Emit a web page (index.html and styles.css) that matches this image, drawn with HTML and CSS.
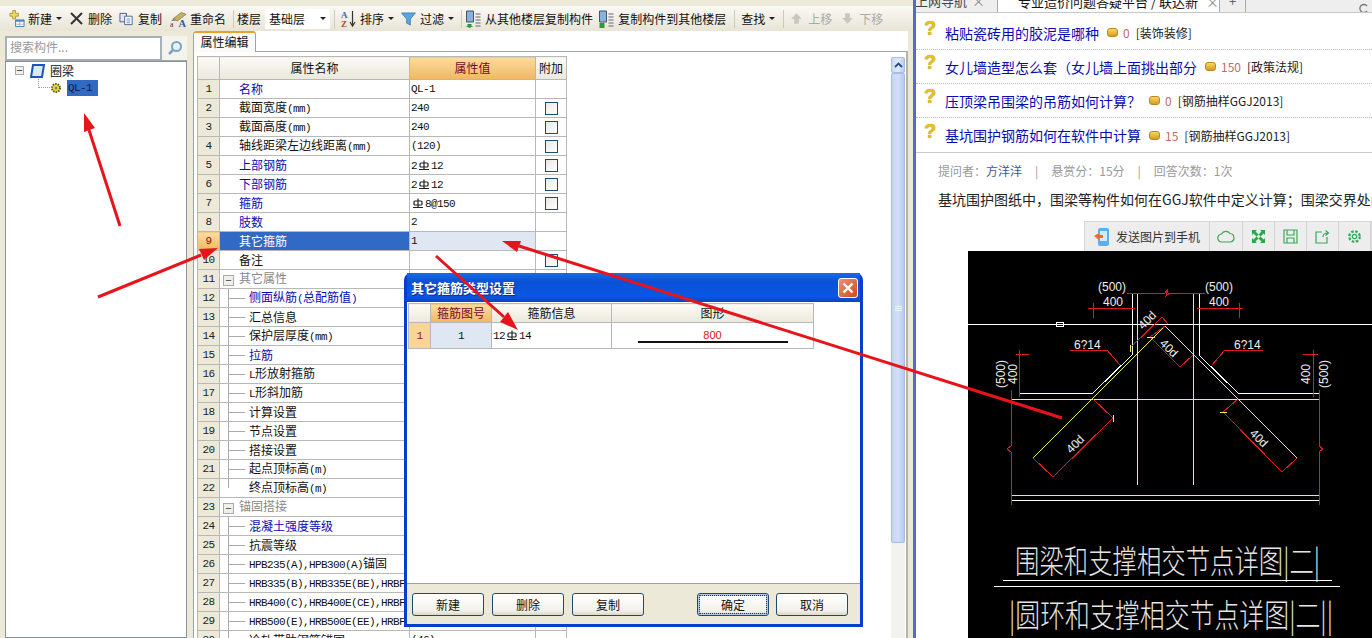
FILE: index.html
```html
<!DOCTYPE html>
<html lang="zh">
<head>
    <meta charset="UTF-8">
    <title>属性编辑</title>
    <link rel="stylesheet" href="styles.css">
</head>
<body>

    <!-- 钢筋符号 -->
    <svg class="defs" width="0" height="0">
        <symbol id="bar" viewBox="0 0 12 12">
            <path d="M1 10.5h10M3 4h6a1 1 0 0 1 1 1v2a1 1 0 0 1-1 1H3a1 1 0 0 1-1-1V5a1 1 0 0 1 1-1zM6 1.5v9" fill="none" stroke="#222" stroke-width="1.2"/>
        </symbol>
    </svg>

    <div class="app">
        <div class="toolbar">
            <div class="tool w-new">
                <svg class="ico" viewBox="0 0 18 18"><path d="M2 3h3V0h3v3h3v3H8v3H5V6H2z" fill="#f0d860" stroke="#a08a30" stroke-width=".8"/><path d="M8 10h9v7H8z" fill="#fff" stroke="#4a78b8"/><path d="M8 10h9v2H8z" fill="#5a88c8"/><path d="M8 14.500h9M12.500 12v5" stroke="#8ab" stroke-width=".8"/></svg>
                <span>新建</span><i class="caret"></i>
            </div>
            <div class="tool w-del">
                <svg class="ico-s" viewBox="0 0 13 13"><path d="M1 1l11 11M12 1L1 12" stroke="#333" stroke-width="2"/></svg>
                <span>删除</span>
            </div>
            <div class="tool w-copy">
                <svg class="ico-m" viewBox="0 0 16 14"><path d="M1 1h7v9H1z" fill="#dde8f6" stroke="#557"/><path d="M6 4h8v9H6z" fill="#fff" stroke="#468"/><path d="M8 7h4M8 9h4M8 11h4" stroke="#57a" stroke-width=".8"/></svg>
                <span>复制</span>
            </div>
            <div class="tool w-ren">
                <svg class="ico" viewBox="0 0 18 18"><path d="M3 9l9-7 5 2-9 7z" fill="#c9b060" stroke="#776a40" stroke-width=".7"/><path d="M1 11l4-3 1 3z" fill="#7a9a70"/><text x="0" y="17" class="ico-t">a</text><text x="9" y="17" class="ico-t2">A</text></svg>
                <span>重命名</span>
            </div>
            <i class="sep"></i>
            <div class="tool w-floor"><span>楼层</span></div>
            <div class="floor-select"><span>基础层</span><i class="caret"></i></div>
            <i class="sep"></i>
            <div class="tool w-sort">
                <svg class="ico" viewBox="0 0 17 18"><text x="1" y="8" class="az a">A</text><text x="1" y="17" class="az z">Z</text><path d="M12.500 1v14M10 12l2.500 4 2.500-4" fill="none" stroke="#333" stroke-width="1.200"/></svg>
                <span>排序</span><i class="caret"></i>
            </div>
            <div class="tool w-filter">
                <svg class="ico-m" viewBox="0 0 15 15"><path d="M0 1h15L9.500 7.500V14l-4-2V7.500z" fill="#5aa6e0" stroke="#2a6aa8" stroke-width=".7"/></svg>
                <span>过滤</span><i class="caret"></i>
            </div>
            <i class="sep"></i>
            <div class="tool w-from">
                <svg class="ico" viewBox="0 0 16 18"><path d="M1 1h7v11H1z" fill="#8ab0dc" stroke="#456"/><path d="M10 4h5M10 7h5M10 10h5M10 13h5M10 16h5" stroke="#667" stroke-width="1.200"/><path d="M2 14h4v2h2l-4 2-4-2h2z" fill="#2a9a3a"/></svg>
                <span>从其他楼层复制构件</span>
            </div>
            <div class="tool w-to">
                <svg class="ico" viewBox="0 0 16 18"><path d="M1 1h7v11H1z" fill="#8ab0dc" stroke="#456"/><path d="M10 4h5M10 7h5M10 10h5M10 13h5M10 16h5" stroke="#667" stroke-width="1.200"/><path d="M1 13h5v5H1z" fill="#2a9a3a"/></svg>
                <span>复制构件到其他楼层</span>
            </div>
            <i class="sep"></i>
            <div class="tool w-find"><span>查找</span><i class="caret"></i></div>
            <i class="sep"></i>
            <div class="tool off w-up">
                <svg class="ico-s" viewBox="0 0 11 11"><path d="M5.500 1L10 6H7.500v4h-4V6H1z" fill="#c8c8c0"/></svg>
                <span>上移</span>
            </div>
            <div class="tool off w-down">
                <svg class="ico-s" viewBox="0 0 11 11"><path d="M5.500 10L10 5H7.500V1h-4v4H1z" fill="#c8c8c0"/></svg>
                <span>下移</span>
            </div>
        </div>

        <div class="main">
            <div class="side">
                <div class="search">
                    <div class="search-input">搜索构件...</div>
                    <div class="search-btn">
                        <svg width="16" height="16" viewBox="0 0 16 16"><circle cx="9.500" cy="6.500" r="4.500" fill="#e8f2fa" stroke="#7aa4c4" stroke-width="2"/><path d="M6 10l-4 4" stroke="#7aa4c4" stroke-width="2.500"/></svg>
                    </div>
                </div>
                <div class="tree">
                    <div class="tree-row">
                        <i class="expander">−</i>
                        <svg class="tree-ico" viewBox="0 0 15 14"><path d="M3 1h11l-2 12H1z" fill="#dbe8f8" stroke="#1b55b4" stroke-width="2"/></svg>
                        <span>圈梁</span>
                    </div>
                    <div class="tree-row child">
                        <i class="dots"></i>
                        <svg class="gear" viewBox="0 0 12 12"><circle cx="6" cy="6" r="4" fill="#e8e040" stroke="#665a10" stroke-width="2" stroke-dasharray="1.500 1"/><circle cx="6" cy="6" r="1.500" fill="#886"/></svg>
                        <span class="picked">QL-1</span>
                    </div>
                </div>
            </div>

            <div class="prop">
                <div class="tabs"><div class="tab">属性编辑</div></div>
                <div class="prop-body">
                    <table class="grid">
                        <colgroup><col class="c-no"><col class="c-name"><col class="c-val"><col class="c-add"></colgroup>
                        <thead>
                            <tr><th></th><th>属性名称</th><th class="hot">属性值</th><th>附加</th></tr>
                        </thead>
                        <tbody>
                            <tr><td class="no">1</td><td class="name link">名称</td><td class="val m">QL-1</td><td></td></tr>
                            <tr><td class="no">2</td><td class="name">截面宽度<span class="m">(mm)</span></td><td class="val m">240</td><td class="add"><i class="check"></i></td></tr>
                            <tr><td class="no">3</td><td class="name">截面高度<span class="m">(mm)</span></td><td class="val m">240</td><td class="add"><i class="check"></i></td></tr>
                            <tr><td class="no">4</td><td class="name">轴线距梁左边线距离<span class="m">(mm)</span></td><td class="val m">(120)</td><td class="add"><i class="check"></i></td></tr>
                            <tr><td class="no">5</td><td class="name link">上部钢筋</td><td class="val m">2<svg class="bar"><use href="#bar"/></svg>12</td><td class="add"><i class="check"></i></td></tr>
                            <tr><td class="no">6</td><td class="name link">下部钢筋</td><td class="val m">2<svg class="bar"><use href="#bar"/></svg>12</td><td class="add"><i class="check"></i></td></tr>
                            <tr><td class="no">7</td><td class="name link">箍筋</td><td class="val m"><svg class="bar"><use href="#bar"/></svg>8@150</td><td class="add"><i class="check"></i></td></tr>
                            <tr><td class="no">8</td><td class="name link">肢数</td><td class="val m">2</td><td></td></tr>
                            <tr class="current"><td class="no">9</td><td class="name">其它箍筋</td><td class="val m">1</td><td></td></tr>
                            <tr><td class="no">10</td><td class="name">备注</td><td class="val"></td><td class="add"><i class="check"></i></td></tr>
                            <tr><td class="no">11</td><td class="name group"><i class="expander">−</i>其它属性</td><td></td><td></td></tr>
                            <tr class="sub"><td class="no">12</td><td class="name link">侧面纵筋<span class="m">(</span>总配筋值<span class="m">)</span></td><td></td><td></td></tr>
                            <tr class="sub"><td class="no">13</td><td class="name">汇总信息</td><td></td><td></td></tr>
                            <tr class="sub"><td class="no">14</td><td class="name">保护层厚度<span class="m">(mm)</span></td><td></td><td></td></tr>
                            <tr class="sub"><td class="no">15</td><td class="name link">拉筋</td><td></td><td></td></tr>
                            <tr class="sub"><td class="no">16</td><td class="name"><span class="m">L</span>形放射箍筋</td><td></td><td></td></tr>
                            <tr class="sub"><td class="no">17</td><td class="name"><span class="m">L</span>形斜加筋</td><td></td><td></td></tr>
                            <tr class="sub"><td class="no">18</td><td class="name">计算设置</td><td></td><td></td></tr>
                            <tr class="sub"><td class="no">19</td><td class="name">节点设置</td><td></td><td></td></tr>
                            <tr class="sub"><td class="no">20</td><td class="name">搭接设置</td><td></td><td></td></tr>
                            <tr class="sub"><td class="no">21</td><td class="name">起点顶标高<span class="m">(m)</span></td><td></td><td></td></tr>
                            <tr class="sub last"><td class="no">22</td><td class="name">终点顶标高<span class="m">(m)</span></td><td></td><td></td></tr>
                            <tr><td class="no">23</td><td class="name group"><i class="expander">−</i>锚固搭接</td><td></td><td></td></tr>
                            <tr class="sub"><td class="no">24</td><td class="name link">混凝土强度等级</td><td></td><td></td></tr>
                            <tr class="sub"><td class="no">25</td><td class="name">抗震等级</td><td></td><td></td></tr>
                            <tr class="sub"><td class="no">26</td><td class="name"><span class="m">HPB235(A),HPB300(A)</span>锚固</td><td></td><td></td></tr>
                            <tr class="sub"><td class="no">27</td><td class="name"><span class="m">HRB335(B),HRB335E(BE),HRBF</span></td><td></td><td></td></tr>
                            <tr class="sub"><td class="no">28</td><td class="name"><span class="m">HRB400(C),HRB400E(CE),HRBF</span></td><td></td><td></td></tr>
                            <tr class="sub"><td class="no">29</td><td class="name"><span class="m">HRB500(E),HRB500E(EE),HRBF</span></td><td></td><td></td></tr>
                            <tr class="sub"><td class="no">30</td><td class="name">冷轧带肋钢筋锚固</td><td class="val m">(46)</td><td></td></tr>
                        </tbody>
                    </table>
                    <div class="scrollbar">
                        <div class="scroll-btn"><svg width="9" height="6" viewBox="0 0 9 6"><path d="M1 5l3.500-3.500L8 5" fill="none" stroke="#2a4a80" stroke-width="1.800"/></svg></div>
                        <div class="scroll-thumb"><i></i><i></i><i></i></div>
                    </div>
                </div>
            </div>
        </div>
    </div>

    <div class="browser">
        <div class="b-tabs">
            <div class="b-tab first">上网导航<em>×</em></div>
            <div class="b-tab active">
                <svg width="14" height="12" viewBox="0 0 14 12"><rect width="14" height="12" rx="2" fill="#3a8ad8"/></svg>
                专业造价问题答疑平台 / 联达新<em>×</em>
            </div>
            <div class="b-tab plus">+</div>
            <div class="b-refresh">
                <svg width="11" height="11" viewBox="0 0 11 11"><path d="M9 8A4 4 0 1 1 9 3" fill="none" stroke="#777" stroke-width="1.300"/></svg>
            </div>
        </div>

        <ul class="questions">
            <li><b class="ask">?</b><a>粘贴瓷砖用的胶泥是哪种</a><i class="coin"></i><span class="score">0</span><span class="topic">[装饰装修]</span></li>
            <li><b class="ask">?</b><a>女儿墙造型怎么套（女儿墙上面挑出部分</a><i class="coin"></i><span class="score">150</span><span class="topic">[政策法规]</span></li>
            <li><b class="ask">?</b><a>压顶梁吊围梁的吊筋如何计算？</a><i class="coin wide"></i><span class="score">0</span><span class="topic">[钢筋抽样GGJ2013]</span></li>
            <li><b class="ask">?</b><a>基坑围护钢筋如何在软件中计算</a><i class="coin"></i><span class="score">15</span><span class="topic">[钢筋抽样GGJ2013]</span></li>
        </ul>

        <div class="meta">
            <span>提问者：<a>方洋洋</a></span><i>|</i><span>悬赏分：15分</span><i>|</i><span>回答次数：1次</span>
        </div>
        <p class="desc">基坑围护图纸中，围梁等构件如何在GGJ软件中定义计算；围梁交界处的钢筋如何处理</p>

        <div class="pic-bar">
            <div class="pic-btn send">
                <svg width="16" height="20" viewBox="0 0 16 20"><rect x="4" y="1" width="11" height="18" rx="2" fill="#5ab0e8"/><rect x="6" y="4" width="7" height="10" fill="#cfeafa"/><path d="M0 9l5-3v2h4v3H5v2z" fill="#ee6a30"/></svg>
                发送图片到手机
            </div>
            <div class="pic-btn cloud"><svg width="18" height="13" viewBox="0 0 18 13"><path d="M5 12a4 4 0 0 1-.5-8A5 5 0 0 1 13 3.500 4.300 4.300 0 0 1 13.500 12z" fill="none" stroke="#3aa858" stroke-width="1.200"/></svg></div>
            <div class="pic-btn w-fit"><svg width="13" height="13" viewBox="0 0 13 13"><path d="M0 0h5L3.500 1.500 6.500 4.500 4.500 6.500 1.500 3.500 0 5zM13 0v5l-1.500-1.500-3 3-2-2 3-3L8 0zM0 13V8l1.500 1.500 3-3 2 2-3 3L5 13zM13 13H8l1.500-1.500-3-3 2-2 3 3L13 8z" fill="#2aa848"/></svg></div>
            <div class="pic-btn w-save"><svg width="15" height="15" viewBox="0 0 15 15"><path d="M1 1h13v13H1zM4 1v5h7V1M4 14V9h7v5" fill="none" stroke="#3aa858" stroke-width="1.200"/></svg></div>
            <div class="pic-btn w-share"><svg width="15" height="15" viewBox="0 0 15 15"><path d="M7 3H1v11h11V8M8 8c0-3 2-4 5-4M10.500 1.500L13.500 4l-3 2.500" fill="none" stroke="#3aa858" stroke-width="1.200"/></svg></div>
            <div class="pic-btn w-set"><svg width="15" height="15" viewBox="0 0 15 15"><circle cx="7.500" cy="7.500" r="2.200" fill="none" stroke="#3aa858" stroke-width="1.200"/><circle cx="7.500" cy="7.500" r="5.200" fill="none" stroke="#3aa858" stroke-width="2.400" stroke-dasharray="2.500 1.600"/></svg></div>
        </div>

        <svg class="cad" viewBox="968 251 404 387">
            <path class="w" d="M968 324H1372M1132 293V355L1093 393H1020M1199 293V355L1238 393H1319M1011 500H1319"/>
            <path class="w" d="M1056 322h7v4h-7z"/>
            <path class="y" d="M1137 293V485M1193 293V485M1011 399H1319M1033 458L1165 326L1297 458M1011 495H1319"/>
            <path class="r" d="M1127 293H1165L1168 289L1166 296L1170 293H1205M1088 308H1135M1197 308H1243M1093 303V318M1239 303V318"/>
            <path class="r" d="M1033 458L1053 477L1113 418L1093 399M1297 458L1282 472L1223 412L1238 399"/>
            <path class="r" d="M1165 326L1150 337L1180 367L1193 355M1130 348L1162 317L1168 324"/>
            <path class="r" d="M1011 390V446L1007 449L1011 452V505M1319 390V446L1323 449L1319 452V505"/>
            <path class="r" d="M1019 350V397M1016 354H1029M1313 350V397M1303 354H1318M1070 350H1107L1120 365M1263 350H1225L1212 365"/>
            <path class="y" d="M1130 345V352M1147 337H1155M1220 412H1227M1113 415V422"/>
            <text class="t" x="1098" y="291">(500)</text>
            <text class="t" x="1103" y="306">400</text>
            <text class="t" x="1205" y="291">(500)</text>
            <text class="t" x="1209" y="306">400</text>
            <text class="t" x="1074" y="349">6?14</text>
            <text class="t" x="1234" y="349">6?14</text>
            <text class="t mid" transform="translate(1005 374) rotate(-90)">(500)</text>
            <text class="t mid" transform="translate(1017 374) rotate(-90)">400</text>
            <text class="t mid" transform="translate(1310 374) rotate(-90)">400</text>
            <text class="t mid" transform="translate(1328 374) rotate(-90)">(500)</text>
            <text class="t mid" transform="translate(1078 447) rotate(-45)">40d</text>
            <text class="t mid" transform="translate(1256 441) rotate(45)">40d</text>
            <text class="t mid" transform="translate(1166 351) rotate(45)">40d</text>
            <text class="t mid" transform="translate(1150 323) rotate(-45)">40d</text>
            <text class="title" x="1015" y="573" textLength="305" lengthAdjust="spacingAndGlyphs">围梁和支撑相交节点详图|二|</text>
            <path class="w" d="M1003 580H1332" stroke-width="3"/>
            <path class="w" d="M994 586H1340"/>
            <text class="title" x="1009" y="627" textLength="324" lengthAdjust="spacingAndGlyphs">|圆环和支撑相交节点详图|二||</text>
        </svg>
    </div>

    <!-- 弹出窗口 -->
    <div class="dialog">
        <div class="dialog-title">
            <span>其它箍筋类型设置</span>
            <div class="dialog-close">
                <svg width="12" height="12" viewBox="0 0 12 12"><path d="M1.500 1.500l9 9M10.500 1.500l-9 9" stroke="#fff" stroke-width="2.400"/></svg>
            </div>
        </div>
        <div class="dialog-body">
            <table class="grid small">
                <colgroup><col class="d-no"><col class="d-fig"><col class="d-info"><col class="d-shape"></colgroup>
                <thead>
                    <tr><th></th><th class="hot">箍筋图号</th><th>箍筋信息</th><th>图形</th></tr>
                </thead>
                <tbody>
                    <tr class="current-d">
                        <td class="no">1</td>
                        <td class="fig m">1</td>
                        <td class="val m">12<svg class="bar"><use href="#bar"/></svg>14</td>
                        <td class="shape"><span>800</span><i></i></td>
                    </tr>
                </tbody>
            </table>
        </div>
        <div class="dialog-foot">
            <button class="btn">新建</button>
            <button class="btn">删除</button>
            <button class="btn">复制</button>
            <button class="btn ok">确定</button>
            <button class="btn">取消</button>
        </div>
    </div>

    <!-- 红色箭头 -->
    <svg class="arrows" viewBox="0 0 1372 638">
        <path d="M120 226L89 130M98 297L201 255M436 256L504 317M1062 418L519 246"/>
        <polygon points="84,113 95,128 84,132"/>
        <polygon points="218,248 204,260 199,249"/>
        <polygon points="518,330 500,322 508,312"/>
        <polygon points="502,241 521,241 517,252"/>
    </svg>

</body>
</html>
```

FILE: styles.css
```css
* {
    box-sizing: border-box;
}

html, body {
    margin: 0;
    padding: 0;
}

body {
    position: relative;
    display: flex;
    width: 1372px;
    height: 638px;
    overflow: hidden;
    background: #fff;
    color: #111;
    font-family: "Noto Sans CJK SC", "Liberation Sans", sans-serif;
    font-size: 12px;
}

.defs {
    position: absolute;
}

/* 左边的软件窗口 */
.app {
    display: flex;
    flex-direction: column;
    width: 916px;
    height: 638px;
    padding-top: 6px;
    background: #ece9d8;
    border-right: 3px solid #5b68c4;
}

.toolbar {
    display: flex;
    align-items: center;
    flex: none;
    height: 25px;
    padding-left: 8px;
    padding-right: 5px;
    background: linear-gradient(#faf9f4, #e8e4d6);
    white-space: nowrap;
}

.tool {
    display: flex;
    align-items: center;
    flex: none;
    gap: 3px;
}

.tool.off {
    color: #aaa;
}

.ico {
    width: 17px;
    height: 18px;
    flex: none;
}

.ico-m {
    width: 15px;
    height: 14px;
    flex: none;
    margin-right: 1px;
}

.ico-s {
    width: 13px;
    height: 13px;
    flex: none;
    margin-right: 2px;
}

.ico-t, .az {
    font-family: "Liberation Serif", serif;
    font-size: 8px;
    fill: #333;
}

.ico-t2 {
    font-family: "Liberation Serif", serif;
    font-size: 11px;
    font-weight: bold;
    fill: #2a5aa0;
}

.az {
    font-size: 9px;
    font-weight: bold;
}

.az.a { fill: #3a6ab0; }
.az.z { fill: #c04040; }

.caret {
    width: 0;
    height: 0;
    margin-left: 1px;
    border-left: 3px solid transparent;
    border-right: 3px solid transparent;
    border-top: 3px solid #222;
}

.sep {
    flex: none;
    width: 1px;
    height: 18px;
    background: #cfcbb8;
}

.w-del { margin-left: 8px; }
.w-copy { margin-left: 7px; }
.w-ren { margin-left: 8px; }
.w-ren + .sep { margin-left: 7px; }
.w-floor { margin-left: 3px; }

.floor-select {
    display: flex;
    align-items: center;
    justify-content: space-between;
    width: 65px;
    height: 20px;
    margin-left: 4px;
    margin-right: 4px;
    padding: 0 4px;
    background: #fff;
}

.w-sort { margin-left: 5px; }
.w-filter { margin-left: 7px; }
.w-filter + .sep { margin-left: 7px; }
.w-from { margin-left: 3px; }
.w-to { margin-left: 5px; }
.w-to + .sep { margin-left: 8px; }
.w-find { margin-left: 6px; }
.w-find + .sep { margin-left: 8px; }
.w-up { margin-left: 6px; }
.w-down { margin-left: 9px; }

.main {
    display: flex;
    flex: 1;
    min-height: 0;
}

/* 构件列表 */
.side {
    display: flex;
    flex-direction: column;
    flex: none;
    width: 182px;
    margin-left: 5px;
    margin-right: 6px;
    padding-top: 5px;
}

.search {
    display: flex;
    flex: none;
    height: 25px;
    background: #f4f3ec;
    border-bottom: 1px solid #a0a8b0;
}

.search-input {
    width: 157px;
    padding-left: 3px;
    background: #fff;
    border: 2px solid #a8b0b8;
    border-bottom-width: 1px;
    color: #999;
    line-height: 18px;
}

.search-btn {
    display: flex;
    align-items: center;
    justify-content: center;
    flex: 1;
}

.tree {
    flex: 1;
    padding: 0 0 0 9px;
    background: #fff;
    border: 1px solid #8a929a;
}

.tree-row {
    display: flex;
    align-items: center;
    height: 17px;
    line-height: 14px;
}

.tree-row .tree-ico {
    width: 15px;
    height: 14px;
    margin: 0 5px 0 6px;
}

.tree-row .expander {
    width: 9px;
    height: 9px;
}

.expander {
    display: inline-flex;
    align-items: center;
    justify-content: center;
    flex: none;
    width: 11px;
    height: 11px;
    background: #f0f0ea;
    border: 1px solid #aaa;
    color: #333;
    font-family: "Liberation Sans", sans-serif;
    font-size: 11px;
    font-style: normal;
    line-height: 1;
}

.child .dots {
    width: 12px;
    height: 9px;
    margin: -9px 0 0 23px;
    border-left: 1px dotted #999;
    border-bottom: 1px dotted #999;
}

.gear {
    width: 12px;
    height: 12px;
    margin-right: 5px;
}

.picked {
    width: 31px;
    height: 16px;
    padding-left: 1px;
    background: #316ac5;
    color: #0a1a3a;
    font-family: "Liberation Mono", monospace;
    font-size: 11px;
    letter-spacing: -.6px;
    line-height: 16px;
}

/* 属性编辑 */
.prop {
    display: flex;
    flex-direction: column;
    flex: none;
    width: 715px;
    background: #fff;
}

.tabs {
    flex: none;
    height: 20px;
    padding-top: 0;
}

.tab {
    width: 63px;
    height: 21px;
    background: #fbfaf6;
    border: 1px solid #9aa4b0;
    border-top: 2px solid #e8a030;
    border-bottom: 0;
    border-radius: 3px 3px 0 0;
    position: relative;
    z-index: 1;
    text-align: center;
    line-height: 17px;
}

.prop-body {
    display: flex;
    flex: 1;
    min-height: 0;
    overflow: hidden;
    padding: 4px 1px 0 3px;
    border-top: 1px solid #9aa4b0;
    border-left: 1px solid #9aa4b0;
    border-right: 2px solid #b8b4a4;
}

.grid {
    flex: none;
    table-layout: fixed;
    width: 369px;
    height: 0;
    border-collapse: collapse;
    background: #fff;
}

.c-no { width: 22px; }
.c-name { width: 190px; }
.c-val { width: 126px; }
.c-add { width: 31px; }

.grid th, .grid td {
    overflow: hidden;
    height: 19px;
    padding: 0;
    border: 1px solid #b8b8b8;
    font-weight: normal;
    white-space: nowrap;
    line-height: 12px;
}

.grid th {
    height: 23px;
    background: linear-gradient(#fbfaf5, #ebe8dc);
    text-align: center;
}

.grid th.hot {
    background: linear-gradient(#fbdca0, #f0b860);
    color: #7a0a2a;
}

.grid .no {
    background: #ece9d8;
    color: #222;
    font-family: "Liberation Mono", monospace;
    font-size: 11px;
    letter-spacing: -.6px;
    text-align: center;
}

.grid .name {
    padding-left: 19px;
}

.grid .link {
    color: #0a0ab4;
}

.grid .val {
    padding-left: 1px;
}

.m {
    font-family: "Liberation Mono", monospace;
    font-size: 11px;
    letter-spacing: -.6px;
}

.bar {
    width: 12px;
    height: 12px;
    margin: 0 1px;
    vertical-align: -2px;
}

.add {
    text-align: center;
}

.check {
    display: block;
    width: 13px;
    height: 13px;
    margin: 0 auto;
    background: linear-gradient(135deg, #e8e8e4, #fff);
    border: 1px solid #1c4a70;
}

.current .no {
    background: linear-gradient(#fbdca0, #f0b860);
    color: #8a1010;
}

.current .name {
    background: #316ac5;
    color: #fff;
}

.current .val {
    background: #dfe7f3;
}

.group {
    color: #888;
}

.grid .group {
    padding-left: 3px;
}

.group .expander {
    margin-right: 5px;
    color: #444;
    vertical-align: -1px;
}

.sub .name {
    position: relative;
    padding-left: 29px;
}

.sub .name::before {
    content: "";
    position: absolute;
    left: 8px;
    top: 0;
    bottom: 0;
    width: 16px;
    border-left: 1px solid #aaa;
    background: linear-gradient(#aaa, #aaa) left 9px / 100% 1px no-repeat;
}

.sub.last .name::before {
    bottom: 9px;
}

.scrollbar {
    display: flex;
    flex-direction: column;
    flex: none;
    width: 14px;
    height: 581px;
    margin-left: auto;
    margin-top: 1px;
    background: #f2f2ee;
}

.scroll-btn {
    display: flex;
    align-items: center;
    justify-content: center;
    flex: none;
    height: 16px;
    background: linear-gradient(90deg, #c8d8f8, #e2ebfb, #b8ccf2);
    border: 1px solid #a8bce4;
    border-radius: 2px;
}

.scroll-thumb {
    display: flex;
    flex-direction: column;
    align-items: center;
    justify-content: center;
    gap: 1px;
    height: 470px;
    background: linear-gradient(90deg, #c4d4f6, #d2dff9, #b6caf0);
    border: 1px solid #a8bce4;
    border-radius: 2px;
}

.scroll-thumb i {
    width: 7px;
    height: 1px;
    background: #eef3fd;
}

/* 右边的浏览器 */
.browser {
    display: flex;
    flex-direction: column;
    flex: none;
    width: 456px;
    height: 638px;
    background: #fff;
}

.b-tabs {
    display: flex;
    flex: none;
    height: 13px;
    overflow: hidden;
    background: #eee;
    border-bottom: 1px solid #c8c8c8;
}

.b-tab {
    display: flex;
    align-items: center;
    flex: none;
    height: 24px;
    margin-top: -12px;
    padding-left: 0;
    border-right: 1px solid #aaa;
    font-size: 13px;
    white-space: nowrap;
}

.b-tab em {
    margin-left: auto;
    color: #888;
    font-style: normal;
}

.b-tab.first {
    width: 83px;
    margin-left: -1px;
    padding-right: 12px;
    color: #444;
}

.b-tab.active {
    width: 222px;
    margin-top: -12px;
    height: 26px;
    gap: 8px;
    padding-left: 12px;
    padding-right: 2px;
    background: #fff;
}

.b-tab.plus {
    justify-content: center;
    width: 26px;
    color: #666;
}

.b-refresh {
    margin-left: auto;
    margin-right: 3px;
}

.questions {
    flex: none;
    margin: 0;
    padding: 3px 0 0;
    list-style: none;
    border-bottom: 1px solid #ccc;
}

.questions li {
    display: flex;
    align-items: center;
    height: 34px;
    padding-left: 8px;
    border-bottom: 1px dotted #bbb;
    white-space: nowrap;
}

.questions li:last-child {
    border-bottom: 0;
}

.ask {
    width: 21px;
    margin-top: -8px;
    color: #e8c020;
    font-family: "Liberation Sans", sans-serif;
    font-size: 20px;
    font-weight: bold;
    text-shadow: 0 0 1px #a08010;
}

.questions a {
    color: #0a0ab4;
    font-size: 14px;
}

.coin {
    flex: none;
    width: 11px;
    height: 9px;
    margin-left: 8px;
    background: linear-gradient(#f8d860, #d89a20);
    border: 1px solid #b88820;
    border-radius: 3px;
}

.coin.wide {
    margin-left: 8px;
}

.score {
    margin-left: 5px;
    color: #c46a6a;
}

.topic {
    margin-left: 6px;
    color: #222;
    font-size: 12px;
}

.meta {
    display: flex;
    flex: none;
    align-items: center;
    height: 20px;
    margin-top: 7px;
    padding-left: 22px;
    color: #999;
}

.meta a {
    color: #3a5a90;
}

.meta i {
    margin: 0 13px;
    font-style: normal;
}

.desc {
    flex: none;
    height: 20px;
    margin: 9px 0 0;
    padding-left: 22px;
    overflow: hidden;
    color: #222;
    font-size: 14px;
    line-height: 20px;
    white-space: nowrap;
}

.pic-bar {
    display: flex;
    flex: none;
    align-self: flex-end;
    width: 288px;
    height: 30px;
    margin-top: 12px;
    background: #ededed;
    border: 1px solid #d8d8d8;
    border-bottom: 0;
}

.pic-btn {
    display: flex;
    align-items: center;
    justify-content: center;
    flex: none;
    gap: 6px;
    border-right: 1px solid #d4d4d4;
    color: #333;
}

.pic-btn.send { width: 125px; }
.pic-btn.cloud { width: 33px; }
.pic-btn.w-fit { width: 32px; }
.pic-btn.w-save { width: 32px; }
.pic-btn.w-share { width: 32px; }
.pic-btn.w-set { width: 32px; }

.cad {
    display: block;
    flex: none;
    width: 404px;
    height: 387px;
    margin-left: 52px;
    background: #000;
    shape-rendering: crispEdges;
}

.cad path {
    fill: none;
}

.cad .w { stroke: #fff; stroke-width: 1; }
.cad .y { stroke: #f0f050; stroke-width: 1; }
.cad .r { stroke: #e01818; stroke-width: 1; }

.cad .t {
    fill: #eee;
    font-family: "Liberation Sans", sans-serif;
    font-size: 12px;
}

.cad .t.mid {
    text-anchor: middle;
}

.cad .title {
    fill: #e4e4e4;
    font-family: "Noto Sans CJK SC", sans-serif;
    font-size: 32px;
    font-weight: 300;
}

/* 弹出窗口 */
.dialog {
    position: absolute;
    left: 404px;
    top: 273px;
    display: flex;
    flex-direction: column;
    width: 459px;
    height: 354px;
    background: #0a3cd0;
    border: 3px solid #0a3cd0;
    border-top: 0;
    border-radius: 7px 7px 0 0;
}

.dialog-title {
    display: flex;
    align-items: center;
    justify-content: space-between;
    flex: none;
    height: 29px;
    padding: 0 2px 0 4px;
    background: linear-gradient(#1a6ae8, #0a50d8 30%, #0a58e4 80%, #0a44c0);
    color: #fff;
    font-size: 13px;
    font-weight: bold;
    text-shadow: 1px 1px 1px #062a80;
}

.dialog-close {
    display: flex;
    align-items: center;
    justify-content: center;
    width: 20px;
    height: 20px;
    background: linear-gradient(135deg, #f09070, #d04a20);
    border: 1px solid #fff;
    border-radius: 3px;
}

.dialog-body {
    flex: 1;
    padding: 1px 0 0 1px;
    background: #fff;
}

.grid.small {
    width: 405px;
}

.d-no { width: 22px; }
.d-fig { width: 61px; }
.d-info { width: 120px; }
.d-shape { width: 202px; }

.grid.small th {
    height: 19px;
}

.grid.small td {
    height: 26px;
}

.grid .current-d .no {
    background: #f9d596;
    color: #8a2020;
}

.fig {
    background: #dfe7f3;
    text-align: center;
}

.shape {
    text-align: center;
}

.shape span {
    display: block;
    height: 12px;
    color: #d01818;
    font-family: "Liberation Sans", sans-serif;
    font-size: 11px;
    line-height: 12px;
}

.shape i {
    display: block;
    width: 150px;
    height: 2px;
    margin: 0 auto;
    background: #111;
}

.dialog-foot {
    display: flex;
    align-items: center;
    flex: none;
    gap: 8px;
    height: 41px;
    padding-left: 5px;
    background: #ece9d8;
    border-top: 1px solid #a0a0a0;
}

.btn {
    width: 72px;
    height: 23px;
    padding: 0;
    background: linear-gradient(#fff, #f2f1ea 80%, #dcd8c8);
    border: 1px solid #1c4a70;
    border-radius: 3px;
    color: #111;
    font-family: inherit;
    font-size: 12px;
}

.btn.ok {
    margin-left: 45px;
    outline: 1px dotted #333;
    outline-offset: -3px;
    box-shadow: inset 0 0 0 2px #b0c8ec;
}

.btn:last-child {
    margin-left: -1px;
}

/* 红色箭头 */
.arrows {
    position: absolute;
    left: 0;
    top: 0;
    width: 1372px;
    height: 638px;
    pointer-events: none;
}

.arrows path {
    fill: none;
    stroke: #e8141c;
    stroke-width: 3;
}

.arrows polygon {
    fill: #e8141c;
}
```
